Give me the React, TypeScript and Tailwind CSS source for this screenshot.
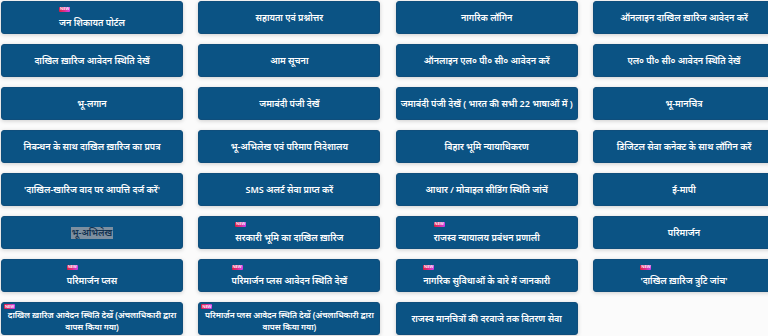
import React from "react";

type Item = { t: string; t2?: string; isNew?: boolean; hl?: boolean } | null;

const items: Item[] = [
  { t: "जन शिकायत पोर्टल", isNew: true },
  { t: "सहायता एवं प्रश्नोत्तर" },
  { t: "नागरिक लॉगिन" },
  { t: "ऑनलाइन दाखिल ख़ारिज आवेदन करें" },
  { t: "दाखिल ख़ारिज आवेदन स्थिति देखें" },
  { t: "आम सूचना" },
  { t: "ऑनलाइन एल० पी० सी० आवेदन करें" },
  { t: "एल० पी० सी० आवेदन स्थिति देखें" },
  { t: "भू-लगान" },
  { t: "जमाबंदी पंजी देखें" },
  { t: "जमाबंदी पंजी देखें ( भारत की सभी 22 भाषाओं में )" },
  { t: "भू-मानचित्र" },
  { t: "निबन्धन के साथ दाखिल ख़ारिज का प्रपत्र" },
  { t: "भू-अभिलेख एवं परिमाप निदेशालय" },
  { t: "बिहार भूमि न्यायाधिकरण" },
  { t: "डिजिटल सेवा कनेक्ट के साथ लॉगिन करें" },
  { t: "'दाखिल-खारिज वाद पर आपत्ति दर्ज करें'" },
  { t: "SMS अलर्ट सेवा प्राप्त करें" },
  { t: "आधार / मोबाइल सीडिंग स्थिति जांचें" },
  { t: "ई-मापी" },
  { t: "भू-अभिलेख", hl: true },
  { t: "सरकारी भूमि का दाखिल ख़ारिज", isNew: true },
  { t: "राजस्व न्यायालय प्रबंधन प्रणाली", isNew: true },
  { t: "परिमार्जन" },
  { t: "परिमार्जन प्लस", isNew: true },
  { t: "परिमार्जन प्लस आवेदन स्थिति देखें", isNew: true },
  { t: "नागरिक सुविधाओं के बारे में जानकारी", isNew: true },
  { t: "'दाखिल ख़ारिज त्रुटि जांच'", isNew: true },
  { t: "दाखिल ख़ारिज आवेदन स्थिति देखें (अंचलाधिकारी द्वारा", t2: "वापस किया गया)", isNew: true },
  { t: "परिमार्जन प्लस आवेदन स्थिति देखें (अंचलाधिकारी द्वारा", t2: "वापस किया गया)", isNew: true },
  { t: "राजस्व मानचित्रों की दरवाजे तक वितरण सेवा" },
  null,
];

function Badge() {
  return (
    <span className="flex h-[5px] w-[11px] items-center justify-center rounded-[1px] bg-gradient-to-r from-[#d8203a] via-[#e02a8a] to-[#c83cf0] text-[4px] leading-none text-white">
      NEW
    </span>
  );
}

function Btn({ item }: { item: Item }) {
  if (!item) return <div className="h-[33px]" />;
  return (
    <div className="flex h-[33px] items-center justify-center overflow-hidden whitespace-nowrap rounded-[3px] border border-[#0f4e7c] bg-[#0b5384] px-[2px] text-center text-[9px] font-semibold text-white shadow-[0_1px_4px_rgba(0,0,0,0.18)]">
      {item.isNew ? (
        item.t2 ? (
          <div className="flex w-full flex-col items-start">
            <Badge />
            <span className="block w-full text-center text-[8.4px] leading-[12px] tracking-[-0.1px]">
              <span className="block">{item.t}</span>
              <span className="block">{item.t2}</span>
            </span>
          </div>
        ) : (
          <div className="flex flex-col items-start">
            <Badge />
            <span className="mt-[4px] leading-[13px]">{item.t}</span>
          </div>
        )
      ) : item.hl ? (
        <span className="bg-[#7d8fa0] px-[1px] leading-[12px] text-[#10314f]">{item.t}</span>
      ) : (
        <span className="leading-[13px]">{item.t}</span>
      )}
    </div>
  );
}

export default function App() {
  return (
    <div
      className="h-[336px] w-[768px] overflow-hidden bg-[#fbfbfb] pl-[1px] pt-[1px]"
      style={{ fontFamily: '"Noto Sans", "Noto Sans Devanagari", "Lohit Devanagari", sans-serif' }}
    >
      <div className="grid w-[780px] grid-cols-[182px_182px_182px_182px] gap-x-[15.33px] gap-y-[10px]">
        {items.map((it, i) => (
          <Btn key={i} item={it} />
        ))}
      </div>
    </div>
  );
}
